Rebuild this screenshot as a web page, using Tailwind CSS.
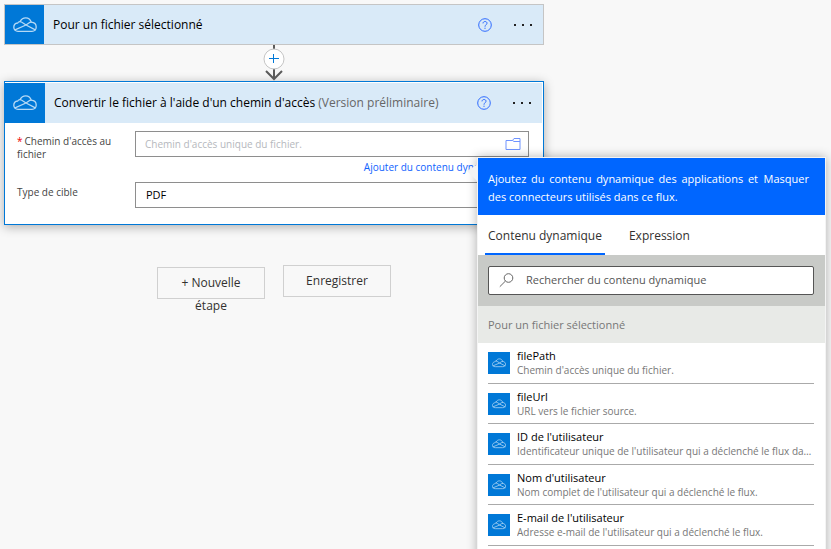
<!DOCTYPE html>
<html lang="fr">
<head>
<meta charset="utf-8">
<meta name="viewport" content="width=device-width, initial-scale=1">
<title>Concepteur de flux</title>
<script src="https://cdn.jsdelivr.net/npm/@tailwindcss/browser@4"></script>
</head>
<body class="bg-[#f8f8f8] font-['Open_Sans','Noto_Sans',sans-serif] text-[#323130]">
<svg class="hidden" aria-hidden="true">
  <symbol id="cloud" viewBox="0 0 24 16">
    <g fill="none" stroke="currentColor" stroke-width="1.3" stroke-linejoin="round" stroke-linecap="round">
      <path d="M5 14.300C2.400 14.300 .8 12.500 .8 10.300C.8 8 2.500 6.200 4.700 6C5.200 5 6 4.600 7 4.600C8.300 2.200 10.200 .9 12.700 .9C15.500 .9 17.500 2.600 18.200 5.200C21.200 5.500 23.200 7.400 23.200 9.900C23.200 12.500 21.500 14.300 19 14.300Z"/>
      <path d="M7 4.600C8.200 4.600 9 5.200 10 6L13 8L22.300 12.800M2 12.800L13 8L15.500 6.200C16.300 5.500 17.200 5.200 18.200 5.200"/>
    </g>
  </symbol>
  <symbol id="help" viewBox="0 0 14 14">
    <g fill="none" stroke="currentColor">
      <circle cx="7" cy="7" r="6.300"/>
      <path d="M5 5.400C5 4.200 5.900 3.500 7 3.500C8.200 3.500 9 4.200 9 5.200C9 6.700 7 6.800 7 8.700M7 9.700V10.900"/>
    </g>
  </symbol>
</svg>

<main class="relative h-screen overflow-hidden px-1 pt-1">
  <section class="w-[540px]">
    <header class="flex h-[41px] items-center border border-[#c5c5c5] bg-[#d9eaf8]">
      <span class="flex h-full w-[39px] shrink-0 items-center justify-center bg-[#0078d7] text-[#b5d9f5]"><svg class="h-4 w-6"><use href="#cloud"/></svg></span>
      <h2 class="ml-[9px] flex-1 text-[12px] leading-5 text-black">Pour un fichier sélectionné</h2>
      <button aria-label="Aide" class="mr-[22px] text-[#2f6bff]"><svg class="size-[14px]"><use href="#help"/></svg></button>
      <button aria-label="Plus d’options" class="mr-[11px] flex w-[18px] justify-between"><i class="size-0.5 bg-[#222]"></i><i class="size-0.5 bg-[#222]"></i><i class="size-0.5 bg-[#222]"></i></button>
    </header>

    <div class="flex h-9 justify-center">
      <button aria-label="Insérer une étape" class="h-9">
        <svg class="h-9 w-[22px]" viewBox="0 0 22 36" fill="none">
          <path d="M11 0V34M3 26L11 34L19 26" stroke="#5a5a5a" stroke-width="2"/>
          <circle cx="11" cy="14" r="10" fill="#fff" stroke="#c5c5c5"/>
          <path d="M6 13.500H16M10.500 9V18" stroke="#0078d7"/>
        </svg>
      </button>
    </div>

    <div class="border border-[#0078d7] bg-white pt-px shadow-[0_2px_10px_rgba(0,0,0,0.3)]">
      <header class="mr-px flex h-10 items-center bg-[#d9eaf8]">
        <span class="flex h-full w-10 shrink-0 items-center justify-center bg-[#0078d7] text-[#b5d9f5]"><svg class="h-4 w-6"><use href="#cloud"/></svg></span>
        <h2 class="ml-[9px] flex-1 text-[12px] leading-5 text-black">Convertir le fichier à l'aide d'un chemin d'accès <span class="text-[#666]">(Version préliminaire)</span></h2>
        <button aria-label="Aide" class="mr-[22px] text-[#2f6bff]"><svg class="size-[14px]"><use href="#help"/></svg></button>
        <button aria-label="Plus d’options" class="mr-[11px] flex w-[18px] justify-between"><i class="size-0.5 bg-[#222]"></i><i class="size-0.5 bg-[#222]"></i><i class="size-0.5 bg-[#222]"></i></button>
      </header>
      <div class="grid grid-cols-[118px_1fr] pt-2 pr-3.5 pb-4 pl-3 text-[10px] text-[#444]">
        <label for="path" class="pt-1 leading-[13px]"><span class="mr-0.5 text-[#e00]">*</span>Chemin d'accès au fichier</label>
        <div>
          <div class="flex h-[26px] items-center border border-[#8e8e8e] bg-white pr-[7px]">
            <input id="path" placeholder="Chemin d'accès unique du fichier." class="h-full min-w-0 flex-1 px-[9px] outline-none placeholder:text-[#b5b8bd]">
            <button aria-label="Parcourir"><svg class="h-3 w-4" viewBox="0 0 16 12" fill="none" stroke="#6f93ff"><path d="M1 2.500H7.500L9 .5H15V11.500H1ZM7.500 2.500L9 3.500H15"/></svg></button>
          </div>
          <div class="flex h-[25px] justify-end pt-0.5 pr-5"><a href="#dynamic" class="leading-4 text-[#0f62fe]">Ajouter du contenu dynamique</a></div>
        </div>
        <label for="target" class="pt-1 leading-[13px]">Type de cible</label>
        <select id="target" class="h-[26px] appearance-none border border-[#8e8e8e] bg-white px-2.5 text-[11px] text-black"><option>PDF</option></select>
      </div>
    </div>

    <div class="mt-10 flex items-start justify-center gap-[18px] text-[12px]">
      <button class="mt-0.5 h-8 w-[108px] border border-[#d0d0d0] px-4 pt-[3px] leading-[23px]">+ Nouvelle étape</button>
      <button class="h-8 w-[108px] border border-[#d0d0d0]">Enregistrer</button>
    </div>
  </section>

  <aside id="dynamic" class="absolute top-[157px] left-[477px] w-[349px] border border-[#f4f4f4] bg-white pb-4 shadow-[0_0_10px_rgba(0,0,0,0.3)]">
    <svg class="absolute top-1.5 -left-[11px] h-5 w-[11px]" viewBox="0 0 11 20"><path d="M11 0L0 7L11 18Z" fill="#f4f4f4"/></svg>
    <header class="flex h-[57px] justify-between bg-[#0066ff] pt-3 pr-4 pl-2.5 text-[11px] leading-[18px] text-white">
      <p class="w-[270px] text-justify">Ajoutez du contenu dynamique des applications et des connecteurs utilisés dans ce flux.</p>
      <button class="h-[18px]">Masquer</button>
    </header>
    <nav class="flex h-10 gap-4 px-[7px] text-[12px]">
      <button class="border-b-2 border-[#0066ff] px-[3px] pt-1 font-medium">Contenu dynamique</button>
      <button class="border-b-2 border-transparent px-2 pt-1">Expression</button>
    </nav>
    <div class="bg-[#c8cac7] py-[11px] pr-[11px] pl-2.5">
      <label class="flex h-[29px] items-center rounded-xs border border-[#555] bg-white pl-2.5">
        <svg class="size-[15px] shrink-0" viewBox="0 0 15 15" fill="none" stroke="#666"><circle cx="9.500" cy="5" r="4.300"/><path d="M6.500 8L.8 13.700"/></svg>
        <input aria-label="Rechercher du contenu dynamique" placeholder="Rechercher du contenu dynamique" class="ml-3 min-w-0 flex-1 text-[11px] outline-none placeholder:text-[#555]">
      </label>
    </div>
    <h3 class="h-[37px] bg-[#e8eae7] px-2.5 text-[11px] leading-[37px] text-[#777]">Pour un fichier sélectionné</h3>
    <ul class="pr-[11px] pl-2.5 text-[10px] leading-[15px] text-[#777]">
      <li class="flex h-[41px] items-center gap-[7px] border-b border-[#aaa]"><span class="flex size-[22px] shrink-0 items-center justify-center bg-[#0078d7] text-[#b5d9f5]"><svg class="h-2.5 w-3.5"><use href="#cloud"/></svg></span><div class="min-w-0"><b class="block text-[11px] font-medium text-black">filePath</b><p class="truncate">Chemin d'accès unique du fichier.</p></div></li>
      <li class="flex h-10 items-center gap-[7px] border-b border-[#aaa]"><span class="flex size-[22px] shrink-0 items-center justify-center bg-[#0078d7] text-[#b5d9f5]"><svg class="h-2.5 w-3.5"><use href="#cloud"/></svg></span><div class="min-w-0"><b class="block text-[11px] font-medium text-black">fileUrl</b><p class="truncate">URL vers le fichier source.</p></div></li>
      <li class="flex h-[41px] items-center gap-[7px] border-b border-[#aaa]"><span class="flex size-[22px] shrink-0 items-center justify-center bg-[#0078d7] text-[#b5d9f5]"><svg class="h-2.5 w-3.5"><use href="#cloud"/></svg></span><div class="min-w-0"><b class="block text-[11px] font-medium text-black">ID de l'utilisateur</b><p class="truncate">Identificateur unique de l'utilisateur qui a déclenché le flux dans Power Automate.</p></div></li>
      <li class="flex h-10 items-center gap-[7px] border-b border-[#aaa]"><span class="flex size-[22px] shrink-0 items-center justify-center bg-[#0078d7] text-[#b5d9f5]"><svg class="h-2.5 w-3.5"><use href="#cloud"/></svg></span><div class="min-w-0"><b class="block text-[11px] font-medium text-black">Nom d'utilisateur</b><p class="truncate">Nom complet de l'utilisateur qui a déclenché le flux.</p></div></li>
      <li class="flex h-[41px] items-center gap-[7px] border-b border-[#aaa]"><span class="flex size-[22px] shrink-0 items-center justify-center bg-[#0078d7] text-[#b5d9f5]"><svg class="h-2.5 w-3.5"><use href="#cloud"/></svg></span><div class="min-w-0"><b class="block text-[11px] font-medium text-black">E-mail de l'utilisateur</b><p class="truncate">Adresse e-mail de l'utilisateur qui a déclenché le flux.</p></div></li>
    </ul>
  </aside>
</main>
</body>
</html>
